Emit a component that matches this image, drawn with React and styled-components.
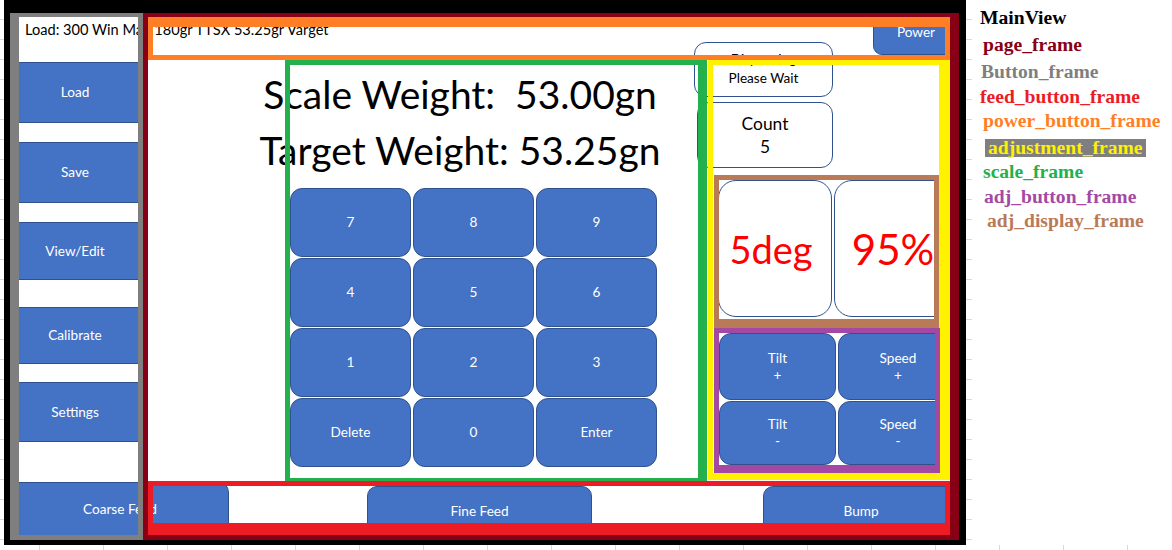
import React from "react";
import styled, { createGlobalStyle } from "styled-components";

const BLUE = "#4472c4";
const EDGE = "#2f528f";
const UI_FONT = `"Lato", "Open Sans", sans-serif`;

const GlobalStyle = createGlobalStyle`
  html, body { margin: 0; padding: 0; background: #fff; }
  body { font-family: ${UI_FONT}; }
  * { box-sizing: border-box; }
`;

// frames drawn over the mockup, in page_frame coordinates
const FRAMES = [
  { name: "Button_frame", c: "#7f7f7f", x: 0, y: 0, w: 133, h: 527, b: "4px 5px 5px 9px" },
  { name: "page_frame", c: "#880015", x: 133, y: 0, w: 816, h: 527, b: "4px 9px 5px 5px" },
  { name: "power_button_frame", c: "#ff7f27", x: 138, y: 4, w: 802, h: 43, b: "10px 5px 5px 5px" },
  { name: "scale_frame", c: "#22b14c", x: 275, y: 47, w: 422, h: 423, b: "5px 9px 5px 5px" },
  { name: "feed_button_frame", c: "#ed1c24", x: 138, y: 468, w: 802, h: 54, b: "5px 5px 12px 5px" },
  { name: "adjustment_frame", c: "#fff200", x: 698, y: 47, w: 242, h: 420, b: "5px 11px 7px 5px" },
  { name: "adj_display_frame", c: "#b97a57", x: 704, y: 162, w: 225, h: 153, b: "5px 5px 9px 5px" },
  { name: "adj_button_frame", c: "#a349a4", x: 704, y: 315, w: 226, h: 145, b: "5px 5px 8px 5px" },
];

const LEGEND = [
  { label: "MainView", c: "#000", indent: 0, mt: 6 },
  { label: "page_frame", c: "#880015", indent: 3, mt: 3 },
  { label: "Button_frame", c: "#7f7f7f", indent: 1, mt: 3 },
  { label: "feed_button_frame", c: "#ed1c24", indent: 0, mt: 1 },
  { label: "power_button_frame", c: "#ff7f27", indent: 3, mt: 0 },
  { label: "adjustment_frame", c: "#fff200", indent: 5, mt: 3, boxed: true },
  { label: "scale_frame", c: "#22b14c", indent: 3, mt: 0 },
  { label: "adj_button_frame", c: "#a349a4", indent: 4, mt: 1 },
  { label: "adj_display_frame", c: "#b97a57", indent: 7, mt: 0 },
];

const KEYS = ["7", "8", "9", "4", "5", "6", "1", "2", "3", "Delete", "0", "Enter"];

const App = () => {
  return (
    <Sheet>
      <GlobalStyle />
      <SheetRow>
        <RowTicks $w={4} />
        <MainView>
          <Sidebar>
            <LoadInfo>Load: 300 Win Mag 180gr TTSX 53.25gr Varget</LoadInfo>
            <SideButton $h={61}>Load</SideButton>
            <SideButton $h={61} $mt={19}>Save</SideButton>
            <SideButton $h={58} $mt={19}>View/Edit</SideButton>
            <SideButton $h={57} $mt={27}>Calibrate</SideButton>
            <SideButton $h={60} $mt={18}>Settings</SideButton>
            <CoarseButton>Coarse Feed</CoarseButton>
          </Sidebar>

          <Main>
            <TopBar>
              <PowerButton>Power</PowerButton>
            </TopBar>

            <Body>
              <ScalePanel>
                <Readout>
                  <div>Scale Weight:  53.00gn</div>
                  <div>Target Weight: 53.25gn</div>
                </Readout>
                <Keypad>
                  {KEYS.map((k) => (
                    <Key key={k}>{k}</Key>
                  ))}
                </Keypad>
              </ScalePanel>

              <StatusCol>
                <WaitBox>
                  <span>Dispensing</span>
                  <span>Please Wait</span>
                </WaitBox>
                <CountBox>
                  <span>Count</span>
                  <span>5</span>
                </CountBox>
                <DisplayRow>
                  <DisplayBox $w={114} $size={38} $pr={8}>5deg</DisplayBox>
                  <DisplayBox $w={118} $size={42}>95%</DisplayBox>
                </DisplayRow>
                <AdjGrid>
                  <AdjButton><span>Tilt</span><span>+</span></AdjButton>
                  <AdjButton><span>Speed</span><span>+</span></AdjButton>
                  <AdjButton><span>Tilt</span><span>-</span></AdjButton>
                  <AdjButton><span>Speed</span><span>-</span></AdjButton>
                </AdjGrid>
              </StatusCol>
            </Body>

            <FeedBar>
              <FeedButton $ml={219} $w={225}>Fine Feed</FeedButton>
              <FeedButton $ml={171} $w={196}>Bump</FeedButton>
            </FeedBar>
          </Main>

          <Overlay>
            {FRAMES.map((f) => (
              <Frame key={f.name} $c={f.c} $x={f.x} $y={f.y} $w={f.w} $h={f.h} $b={f.b} />
            ))}
          </Overlay>
        </MainView>
        <RowTicks $w={6} />
        <Legend>
          {LEGEND.map((l) => (
            <LegendItem key={l.label} $c={l.c} $indent={l.indent} $mt={l.mt}>
              {l.boxed ? <Highlight>{l.label}</Highlight> : l.label}
            </LegendItem>
          ))}
        </Legend>
      </SheetRow>
      <ColTicks />
    </Sheet>
  );
};

export default App;

const Sheet = styled.div`
  width: 1172px;
  height: 550px;
  overflow: hidden;
  display: flex;
  flex-direction: column;
  background: #fff;
`;

const SheetRow = styled.div`
  display: flex;
  height: 545px;
  flex: none;
`;

const RowTicks = styled.div`
  width: ${(p) => p.$w}px;
  flex: none;
  background: repeating-linear-gradient(to bottom, transparent 0 19px, #d9d9d9 19px 20px);
`;

const ColTicks = styled.div`
  height: 5px;
  flex: none;
  background: repeating-linear-gradient(to right, transparent 0 63px, #d9d9d9 63px 64px);
  background-position: -24px 0;
`;

const MainView = styled.div`
  position: relative;
  flex: none;
  width: 962px;
  height: 545px;
  border: solid #000;
  border-width: 13px 7px 5px 6px;
  background: #fff;
  display: flex;
  font-family: ${UI_FONT};
`;

const BlueButton = styled.button`
  flex: none;
  display: flex;
  flex-direction: column;
  align-items: center;
  justify-content: center;
  margin: 0;
  padding: 0;
  background: ${BLUE};
  color: #fff;
  border: 1px solid ${EDGE};
  font-family: ${UI_FONT};
  font-size: 13.6px;
  line-height: 17px;
`;

const Sidebar = styled.div`
  flex: none;
  width: 126px;
  margin-left: 2px;
  padding-top: 4px;
  display: flex;
  flex-direction: column;
`;

const LoadInfo = styled.div`
  height: 45px;
  padding: 4px 0 0 13px;
  white-space: nowrap;
  font-size: 14.6px;
  line-height: 18px;
  color: #000;
`;

const SideButton = styled(BlueButton)`
  width: 126px;
  height: ${(p) => p.$h}px;
  margin-top: ${(p) => p.$mt || 0}px;
  border-width: 1px 0;
`;

const CoarseButton = styled(SideButton)`
  width: 217px;
  height: 53px;
  margin-top: 40px;
  border-radius: 0 10px 0 0;
  border-width: 1px 1px 0 0;
`;

const Main = styled.div`
  flex: none;
  width: 802px;
  margin-left: 10px;
  padding-top: 4px;
  display: flex;
  flex-direction: column;
`;

const TopBar = styled.div`
  flex: none;
  height: 43px;
  display: flex;
  justify-content: flex-end;
  align-items: flex-start;
`;

const PowerButton = styled(BlueButton)`
  width: 86px;
  height: 38px;
  margin-right: -9px;
  padding-bottom: 8px;
  border-radius: 0 0 0 9px;
`;

const Body = styled.div`
  flex: none;
  height: 421px;
  display: flex;
`;

const ScalePanel = styled.div`
  flex: none;
  width: 409px;
  margin-left: 137px;
  display: flex;
  flex-direction: column;
`;

const Readout = styled.div`
  margin: 6px 0 0 -59px;
  text-align: center;
  font-size: 39px;
  line-height: 56px;
  white-space: pre;
  color: #000;
`;

const Keypad = styled.div`
  margin: 10px 0 0 5px;
  display: grid;
  grid-template-columns: repeat(3, 121px);
  grid-auto-rows: 69px;
  gap: 1px 2px;
`;

const Key = styled(BlueButton)`
  border-radius: 12px;
`;

const StatusCol = styled.div`
  flex: none;
  width: 256px;
  display: flex;
  flex-direction: column;
`;

const InfoBox = styled.div`
  flex: none;
  display: flex;
  flex-direction: column;
  align-items: center;
  justify-content: center;
  background: #fff;
  border: 1.3px solid ${EDGE};
  border-radius: 12px;
  color: #000;
`;

const WaitBox = styled(InfoBox)`
  width: 139px;
  height: 55px;
  margin-top: -18px;
  padding-bottom: 2px;
  font-size: 13.6px;
  line-height: 19px;
`;

const CountBox = styled(InfoBox)`
  width: 136px;
  height: 66px;
  margin: 5px 0 0 3px;
  font-size: 17.4px;
  line-height: 23px;
`;

const DisplayRow = styled.div`
  flex: none;
  display: flex;
  gap: 2px;
  height: 137px;
  margin: 12px 0 0 24px;
`;

const DisplayBox = styled(InfoBox)`
  width: ${(p) => p.$w}px;
  height: 137px;
  padding-right: ${(p) => p.$pr || 0}px;
  border-radius: 18px;
  color: #ff0000;
  font-size: ${(p) => p.$size}px;
  line-height: 1;
`;

const AdjGrid = styled.div`
  flex: none;
  margin: 16px 0 0 25px;
  display: grid;
  grid-template-columns: 117px 120px;
  grid-template-rows: 67px 64px;
  gap: 1px 2px;
`;

const AdjButton = styled(BlueButton)`
  border-radius: 12px;
`;

const FeedBar = styled.div`
  flex: none;
  height: 54px;
  padding-top: 5px;
  display: flex;
  align-items: flex-start;
`;

const FeedButton = styled(BlueButton)`
  width: ${(p) => p.$w}px;
  height: 50px;
  margin-left: ${(p) => p.$ml}px;
  border-radius: 10px 10px 0 0;
`;

const Overlay = styled.div`
  position: absolute;
  inset: 0;
  pointer-events: none;
`;

const Frame = styled.div`
  position: absolute;
  left: ${(p) => p.$x}px;
  top: ${(p) => p.$y}px;
  width: ${(p) => p.$w}px;
  height: ${(p) => p.$h}px;
  border: solid ${(p) => p.$c};
  border-width: ${(p) => p.$b};
`;

const Legend = styled.div`
  flex: none;
  padding-left: 8px;
  display: flex;
  flex-direction: column;
  font-family: "Liberation Serif", "Times New Roman", serif;
  font-weight: bold;
  font-size: 19.6px;
`;

const LegendItem = styled.div`
  height: 24px;
  line-height: 24px;
  margin-top: ${(p) => p.$mt}px;
  margin-left: ${(p) => p.$indent}px;
  color: ${(p) => p.$c};
  white-space: nowrap;
`;

const Highlight = styled.span`
  display: inline-block;
  height: 18px;
  line-height: 18px;
  margin-top: 3px;
  padding: 0 3px;
  background: #7f7f7f;
  vertical-align: top;
`;
